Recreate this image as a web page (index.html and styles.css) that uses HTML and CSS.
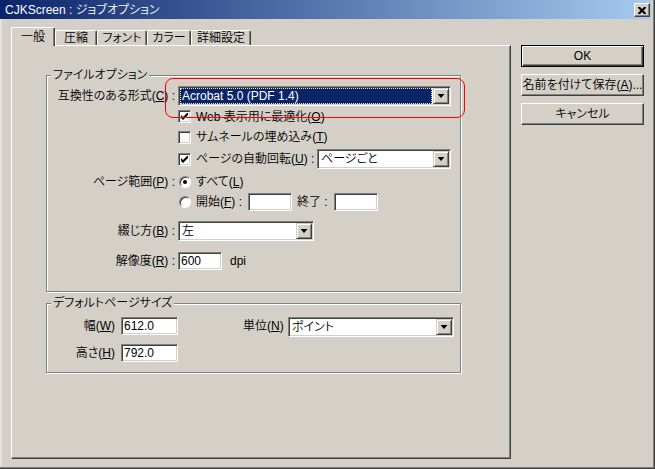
FILE: index.html
```html
<!DOCTYPE html>
<html lang="ja">
<head>
<meta charset="utf-8">
<title>CJKScreen : ジョブオプション</title>
<link rel="stylesheet" href="styles.css">
</head>
<body>
<div class="win">
  <div class="titlebar">
    <span class="title">CJKScreen : ジョブオプション</span>
    <span class="close"><svg width="8" height="7" viewBox="0 0 8 7"><path d="M0 0h2l2 2 2-2h2v1l-2.5 2.5 2.5 2.5v1h-2l-2-2-2 2h-2v-1l2.5-2.5-2.5-2.5z" fill="#000"/></svg></span>
  </div>
  <div class="body">
    <div class="tabs-area">
      <div class="tabrow">
        <div class="tab active w44">一般</div>
        <div class="tab w42">圧縮</div>
        <div class="tab w50">フォント</div>
        <div class="tab w44">カラー</div>
        <div class="tab w60">詳細設定</div>
      </div>
      <div class="panel">
        <fieldset class="group g1">
          <legend>ファイルオプション</legend>
          <div class="row ra">
            <span class="lbl">互換性のある形式(<u>C</u>) :</span>
            <div class="combo cw-compat"><span class="val nopad"><span class="sel">Acrobat 5.0 (PDF 1.4)</span></span><span class="dd"></span></div>
          </div>
          <div class="row rb-row">
            <span class="lbl"></span>
            <span class="chk"><span class="cb"><svg width="7" height="7" viewBox="0 0 7 7"><polygon points="0,2 2,4 7,-1 7,2 2,7 0,5" fill="#000"/></svg></span>Web 表示用に最適化(<u>O</u>)</span>
          </div>
          <div class="row">
            <span class="lbl"></span>
            <span class="chk"><span class="cb"></span>サムネールの埋め込み(<u>T</u>)</span>
          </div>
          <div class="row rd">
            <span class="lbl"></span>
            <span class="chk w139"><span class="cb"><svg width="7" height="7" viewBox="0 0 7 7"><polygon points="0,2 2,4 7,-1 7,2 2,7 0,5" fill="#000"/></svg></span>ページの自動回転(<u>U</u>) :</span>
            <div class="combo cw-rot"><span class="val">ページごと</span><span class="dd"></span></div>
          </div>
          <div class="row re">
            <span class="lbl">ページ範囲(<u>P</u>) :</span>
            <span class="chk"><span class="rb on"></span>すべて(<u>L</u>)</span>
          </div>
          <div class="row">
            <span class="lbl"></span>
            <span class="chk w70"><span class="rb"></span>開始(<u>F</u>) :</span>
            <span class="tb w44"></span>
            <span class="txt end">終了 :</span>
            <span class="tb w44"></span>
          </div>
          <div class="row rg">
            <span class="lbl">綴じ方(<u>B</u>) :</span>
            <div class="combo cw-bind"><span class="val">左</span><span class="dd"></span></div>
          </div>
          <div class="row rh">
            <span class="lbl">解像度(<u>R</u>) :</span>
            <span class="tb w44">600</span>
            <span class="txt dpi">dpi</span>
          </div>
        </fieldset>
        <fieldset class="group g2">
          <legend>デフォルトページサイズ</legend>
          <div class="row2 r21">
            <span class="lbl2">幅(<u>W</u>)</span>
            <span class="tb w57">612.0</span>
            <span class="unit">単位(<u>N</u>)</span>
            <div class="combo cw-unit"><span class="val">ポイント</span><span class="dd"></span></div>
          </div>
          <div class="row2 r22">
            <span class="lbl2">高さ(<u>H</u>)</span>
            <span class="tb w57">792.0</span>
          </div>
        </fieldset>
      </div>
    </div>
    <div class="buttons">
      <div class="btn default">OK</div>
      <div class="btn save">名前を付けて保存(<u>A</u>)...</div>
      <div class="btn">キャンセル</div>
    </div>
  </div>
  <div class="annot"></div>
</div>
</body>
</html>
```

FILE: styles.css
```css
* { box-sizing: border-box; }
html, body { margin: 0; padding: 0; }
body {
  width: 655px;
  height: 469px;
  overflow: hidden;
  background: #d4d0c8;
  font-family: "Liberation Sans", "Noto Sans CJK JP", sans-serif;
  font-size: 12px;
  font-weight: 350;
  font-feature-settings: "palt";
  color: #000;
}
u { text-underline-offset: 1px; }

.win {
  position: relative;
  width: 655px;
  height: 469px;
  background: #d4d0c8;
  border-right: 1px solid #404040;
  border-bottom: 1px solid #404040;
  box-shadow: inset -1px -1px 0 #808080, inset 2px 0 0 #e4e2dc;
}

.titlebar {
  height: 19px;
  margin-right: 3px;
  background: linear-gradient(to right, #0a246a, #a6caf0);
  display: flex;
  align-items: center;
  justify-content: space-between;
  padding: 0 1px 0 5px;
}
.title { color: #fff; line-height: 14px; white-space: nowrap; }
.close {
  width: 16px;
  height: 14px;
  margin-top: 1px;
  background: #d4d0c8;
  border: 1px solid;
  border-color: #fff #404040 #404040 #fff;
  box-shadow: inset -1px -1px 0 #808080;
  display: flex;
  align-items: center;
  justify-content: center;
}

.body {
  display: flex;
  padding: 8px 0 0 11px;
}
.tabs-area { width: 500px; flex: none; }

.tabrow {
  display: flex;
  align-items: flex-end;
  height: 19px;
  margin-bottom: -1px;
  position: relative;
  z-index: 1;
}
.tab {
  height: 15px;
  margin-bottom: 1px;
  border-top: 1px solid #fff;
  border-left: 1px solid #fff;
  border-right: 1px solid #404040;
  box-shadow: inset -1px 0 0 #808080;
  border-radius: 2px 2px 0 0;
  background: #d4d0c8;
  text-align: center;
  line-height: 14px;
  white-space: nowrap;
  flex: none;
}
.tab.active {
  height: 19px;
  margin-bottom: 0;
  padding-top: 2px;
}
.w42 { width: 42px; }
.w44 { width: 44px; }
.w50 { width: 50px; }
.w57 { width: 57px; }
.w60 { width: 60px; }
.w70 { width: 70px; }
.w139 { width: 139px; }

.panel {
  height: 414px;
  border: 1px solid;
  border-color: #fff #404040 #404040 #fff;
  box-shadow: inset -1px -1px 0 #808080;
  padding: 22px 0 0 34px;
}

.group {
  margin: 0;
  padding: 0;
  min-width: 0;
  width: 415px;
  border: 1px solid #808080;
  box-shadow: inset 1px 1px 0 #fff, 1px 1px 0 #fff;
}
.group legend {
  margin-left: 4px;
  padding: 0 2px;
  line-height: 14px;
  background: #d4d0c8;
}
.g1 { padding: 4px 0 20px 0; }
.g2 { margin-top: 4px; padding: 7px 0 10px 0; }

.row {
  display: flex;
  align-items: center;
  height: 20px;
  white-space: nowrap;
}
.rb-row { height: 21px; }
.rd { margin-top: 2px; }
.re { margin-top: 3px; }
.rg { margin-top: 9px; }
.rh { margin-top: 10px; }
.lbl {
  width: 131px;
  flex: none;
  text-align: right;
  padding-right: 3px;
  line-height: 14px;
}
.chk {
  display: flex;
  align-items: center;
  flex: none;
  line-height: 14px;
}
.txt { line-height: 14px; flex: none; }
.end { margin-left: 5px; width: 37px; }
.dpi { margin-left: 8px; }

.cb {
  width: 13px;
  height: 13px;
  flex: none;
  margin-right: 5px;
  background: #fff;
  border: 1px solid;
  border-color: #808080 #fff #fff #808080;
  box-shadow: inset 1px 1px 0 #404040, inset -1px -1px 0 #d4d0c8;
  display: flex;
  align-items: center;
  justify-content: center;
}
.cb svg { display: block; }

.rb {
  position: relative;
  width: 12px;
  height: 12px;
  flex: none;
  margin: 0 5px 0 1px;
  border-radius: 50%;
  background: #fff;
  border: 1px solid;
  border-color: #808080 #fff #fff #808080;
  box-shadow: inset 1px 1px 0 #404040;
}
.rb.on::after {
  content: "";
  position: absolute;
  left: 3px;
  top: 3px;
  width: 4px;
  height: 4px;
  border-radius: 50%;
  background: #000;
}

.tb {
  display: block;
  flex: none;
  height: 18px;
  background: #fff;
  border: 1px solid;
  border-color: #808080 #fff #fff #808080;
  box-shadow: inset 1px 1px 0 #404040, inset -1px -1px 0 #d4d0c8;
  padding: 0 2px;
  line-height: 16px;
  white-space: nowrap;
}

.combo {
  display: flex;
  flex: none;
  height: 20px;
  padding: 1px;
  background: #fff;
  border: 1px solid;
  border-color: #808080 #fff #fff #808080;
  box-shadow: inset 1px 1px 0 #404040, inset -1px -1px 0 #d4d0c8;
}
.cw-compat { width: 273px; }
.cw-rot { width: 134px; }
.cw-bind { width: 136px; }
.cw-unit { width: 166px; }
.val {
  flex: 1;
  min-width: 0;
  padding-left: 2px;
  line-height: 16px;
  white-space: nowrap;
  overflow: hidden;
}
.val.nopad { padding: 0 1px 0 0; }
.sel {
  display: block;
  height: 16px;
  background: #0a246a;
  color: #fff;
  border: 1px dotted #f2e6a8;
  padding-left: 1px;
  line-height: 14px;
}
.dd {
  width: 16px;
  height: 16px;
  flex: none;
  background: #d4d0c8;
  border: 1px solid;
  border-color: #d4d0c8 #404040 #404040 #d4d0c8;
  box-shadow: inset 1px 1px 0 #fff, inset -1px -1px 0 #808080;
  display: flex;
  align-items: center;
  justify-content: center;
}
.dd::after {
  content: "";
  width: 7px;
  height: 4px;
  background: #000;
  clip-path: polygon(0 0, 100% 0, 50% 100%);
}

.row2 {
  display: flex;
  align-items: flex-start;
  white-space: nowrap;
}
.r21 { height: 20px; }
.r22 { height: 18px; margin-top: 7px; }
.lbl2 {
  width: 72px;
  flex: none;
  text-align: right;
  padding-right: 4px;
  line-height: 18px;
  margin-right: 2px;
}
.unit {
  width: 45px;
  flex: none;
  margin-left: 65px;
  line-height: 18px;
}

.buttons {
  width: 123px;
  flex: none;
  margin-left: 10px;
  padding-top: 18px;
  display: flex;
  flex-direction: column;
  gap: 7px;
}
.btn {
  height: 22px;
  border: 1px solid;
  border-color: #fff #404040 #404040 #fff;
  box-shadow: inset -1px -1px 0 #808080;
  display: flex;
  align-items: center;
  justify-content: center;
  line-height: 14px;
  white-space: nowrap;
}
.btn.default {
  border-color: #000;
  box-shadow: inset 1px 1px 0 #fff, inset -1px -1px 0 #404040, inset -2px -2px 0 #808080;
}

.annot {
  position: absolute;
  left: 165px;
  top: 78px;
  width: 300px;
  height: 40px;
  border: 1px solid #f00;
  border-radius: 8px;
  pointer-events: none;
}
```
